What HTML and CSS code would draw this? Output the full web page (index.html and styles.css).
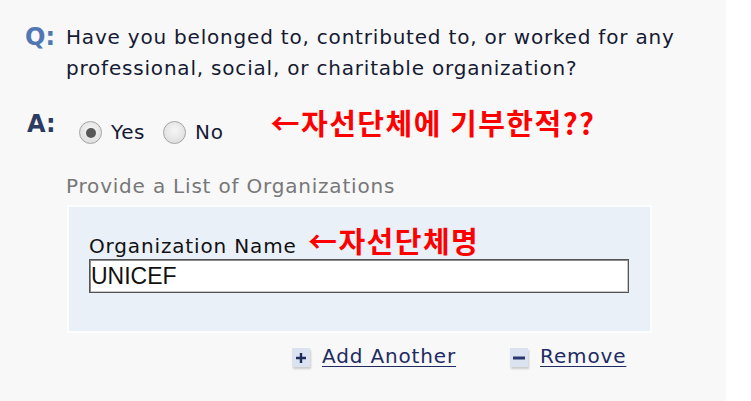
FILE: index.html
```html
<!DOCTYPE html>
<html lang="en">
<head>
<meta charset="utf-8">
<title>Organizations</title>
<link rel="stylesheet" href="styles.css">
</head>
<body>
<div class="panel">
  <div class="qa">
    <span class="label label-q">Q:</span>
    <p class="question">Have you belonged to, contributed to, or worked for any professional, social, or charitable organization?</p>
  </div>
  <div class="qa answer">
    <span class="label label-a">A:</span>
    <label class="radio"><span class="dot checked"></span>Yes</label>
    <label class="radio"><span class="dot"></span>No</label>
    <span class="note note-a">←자선단체에 기부한적??</span>
  </div>
  <div class="section">
    <div class="sub-title">Provide a List of Organizations</div>
    <div class="box">
      <div class="field-label">Organization Name <span class="note note-b">←자선단체명</span></div>
      <div class="input">UNICEF</div>
    </div>
    <div class="actions">
      <a class="action" href="#"><span class="icon"><svg width="10" height="10" viewBox="0 0 10 10"><path d="M3.8 0h2.4v3.8H10v2.4H6.2V10H3.8V6.2H0V3.8h3.8z" fill="#1f2d5e"/></svg></span><span class="link">Add Another</span></a>
      <a class="action" href="#"><span class="icon"><svg width="12" height="10" viewBox="0 0 12 10"><rect x="0" y="3.5" width="12" height="3" fill="#2a3670"/></svg></span><span class="link">Remove</span></a>
    </div>
  </div>
</div>
</body>
</html>
```
FILE: styles.css
```css
html, body {
  margin: 0;
  padding: 0;
  background: #ffffff;
}
body {
  font-family: "DejaVu Sans", Verdana, sans-serif;
  color: #161a33;
}
.panel {
  width: 726px;
  height: 401px;
  box-sizing: border-box;
  background: #f8f8f8;
  padding: 22px 0 0 25px;
}
.qa {
  display: flex;
  align-items: flex-start;
}
.label {
  font-weight: bold;
  font-size: 24px;
  line-height: 31px;
  width: 41px;
  flex: none;
}
.label-q {
  color: #4f77b4;
}
.label-a {
  color: #2c3b62;
  padding-left: 2px;
  width: 39px;
}
.question {
  margin: 0;
  font-size: 20px;
  letter-spacing: 0.8px;
  line-height: 31px;
  width: 650px;
}
.answer {
  margin-top: 25px;
  height: 36px;
}
.radio {
  display: flex;
  align-items: center;
  font-size: 20px;
  letter-spacing: 0.6px;
  line-height: 23px;
  margin-left: 13px;
  margin-top: 12px;
}
.radio + .radio {
  margin-left: 18px;
}
.dot {
  width: 21px;
  height: 21px;
  border: 1px solid #a4a4a4;
  border-radius: 50%;
  background: radial-gradient(circle at 50% 40%, #f6f6f6, #d8d8d8);
  margin-right: 9px;
  position: relative;
  box-sizing: content-box;
}
.dot.checked::after {
  content: "";
  position: absolute;
  left: 5.5px;
  top: 5.5px;
  width: 10px;
  height: 10px;
  border-radius: 50%;
  background: #575757;
}
.note {
  color: #ff0000;
  font-weight: bold;
  font-family: "Noto Sans CJK KR", "DejaVu Sans", sans-serif;
  font-size: 29px;
  letter-spacing: 1.5px;
}
.note-a {
  margin-left: 47px;
  line-height: 27px;
}
.section {
  margin-left: 42px;
  margin-top: 27px;
}
.sub-title {
  color: #777777;
  font-size: 20px;
  letter-spacing: 0.8px;
  line-height: 28px;
  margin-left: -1px;
}
.box {
  margin-top: 5px;
  width: 585px;
  height: 128px;
  box-sizing: border-box;
  border: 2px solid #fdfdfd;
  background: #e9f0f8;
  padding: 26px 0 0 20px;
}
.field-label {
  font-size: 20px;
  letter-spacing: 0.85px;
  color: #111111;
  line-height: 26px;
  height: 26px;
}
.note-b {
  margin-left: 4px;
  line-height: 0;
}
.input {
  width: 540px;
  height: 34px;
  box-sizing: border-box;
  border: 1px solid #555555;
  box-shadow: inset 1px 1px 0 #8a8a8a, inset -1px -1px 0 #c8c8c8;
  background: #ffffff;
  font-family: "Liberation Sans", Arial, sans-serif;
  font-size: 23px;
  line-height: 32px;
  padding-left: 1px;
  color: #111;
}
.actions {
  display: flex;
  align-items: flex-start;
  margin-top: 11px;
  padding-left: 225px;
}
.action {
  display: flex;
  align-items: flex-start;
  text-decoration: none;
  margin-right: 54px;
}
.icon {
  width: 18px;
  height: 19px;
  margin-top: 4px;
  background: #dae3ef;
  box-shadow: 1px 2px 2px rgba(0,0,0,0.18);
  display: flex;
  align-items: center;
  justify-content: center;
  margin-right: 12px;
}
.link {
  color: #1f2b63;
  font-size: 20px;
  letter-spacing: 0.85px;
  line-height: 24px;
  text-decoration: underline;
  text-decoration-thickness: 1px;
  text-underline-offset: 3px;
}
```
